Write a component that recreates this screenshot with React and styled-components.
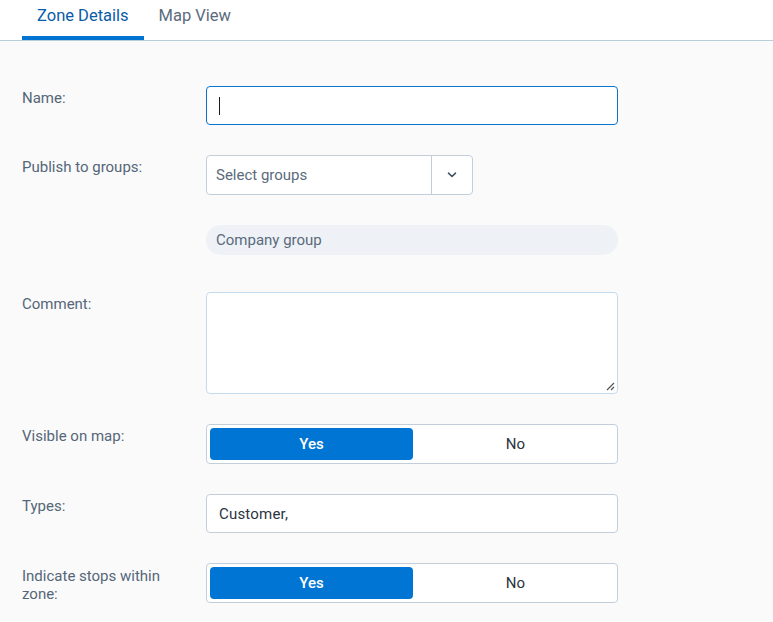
import React from "react";
import styled, { createGlobalStyle } from "styled-components";

const Global = createGlobalStyle`
  html, body { margin: 0; padding: 0; background: #fafafa; }
  body { font-family: Roboto, "Liberation Sans", sans-serif; }
  * { box-sizing: border-box; }
`;

const Page = styled.div`
  width: 773px;
  min-height: 622px;
  background: #fafafa;
`;

const TabBar = styled.div`
  display: flex;
  background: #ffffff;
  border-bottom: 1px solid #b9cdd9;
  padding-left: 22px;
  height: 41px;
`;

const Tab = styled.div`
  height: 40px;
  padding: 6px 15px 0;
  font-size: 16.5px;
  line-height: 20px;
  color: ${(p) => (p.$active ? "#0a5ca8" : "#5b6b7d")};
  border-bottom: 4px solid ${(p) => (p.$active ? "#0074d0" : "transparent")};
`;

const Form = styled.div`
  display: flex;
  flex-direction: column;
  padding: 45px 0 0 22px;
`;

const Row = styled.div`
  display: grid;
  grid-template-columns: 184px 412px;
  align-items: start;
  margin-bottom: ${(p) => p.$mb}px;
`;

const Label = styled.div`
  font-size: 15px;
  line-height: 18px;
  color: #556679;
  padding-top: ${(p) => p.$pt ?? 3}px;
  padding-right: 20px;
`;

const TextInput = styled.div`
  height: 39px;
  border: 1px solid ${(p) => (p.$focus ? "#0a74cf" : "#c2cfdb")};
  border-radius: 4px;
  background: #ffffff;
  display: flex;
  align-items: center;
  padding-left: 12px;
  font-size: 15px;
  letter-spacing: 0.2px;
  color: #2b3440;
`;

const Caret = styled.span`
  display: block;
  width: 1px;
  height: 18px;
  background: #1a1a1a;
`;

const Select = styled.div`
  width: 267px;
  height: 40px;
  border: 1px solid #c2cfdb;
  border-radius: 4px;
  background: #ffffff;
  display: flex;
  align-items: stretch;
`;

const SelectValue = styled.div`
  flex: 1;
  display: flex;
  align-items: center;
  padding-left: 9px;
  font-size: 15px;
  color: #5a6a7c;
  border-right: 1px solid #c2cfdb;
`;

const SelectArrow = styled.div`
  width: 40px;
  display: flex;
  align-items: center;
  justify-content: center;
  color: #3e5064;
`;

const Chip = styled.div`
  height: 30px;
  border-radius: 15px;
  background: #eef2f6;
  display: flex;
  align-items: center;
  padding-left: 10px;
  font-size: 15px;
  color: #5a6a7c;
`;

const TextArea = styled.div`
  position: relative;
  height: 102px;
  border: 1px solid #c4dbee;
  border-radius: 4px;
  background: #ffffff;
`;

const Grip = styled.svg`
  position: absolute;
  right: 2px;
  bottom: 2px;
`;

const Toggle = styled.div`
  height: 40px;
  border: 1px solid #c2cfdb;
  border-radius: 4px;
  background: #ffffff;
  display: grid;
  grid-template-columns: 203px 1fr;
  padding: 3px;
`;

const Option = styled.div`
  border-radius: 4px;
  display: flex;
  align-items: center;
  justify-content: center;
  padding-left: ${(p) => (p.$on ? 0 : 4)}px;
  font-size: 15px;
  font-weight: ${(p) => (p.$on ? 500 : 400)};
  background: ${(p) => (p.$on ? "#0075d3" : "transparent")};
  color: ${(p) => (p.$on ? "#ffffff" : "#2b3440")};
`;

const YesNo = () => (
  <Toggle>
    <Option $on>Yes</Option>
    <Option>No</Option>
  </Toggle>
);

export default function App() {
  return (
    <Page>
      <Global />
      <TabBar>
        <Tab $active>Zone Details</Tab>
        <Tab>Map View</Tab>
      </TabBar>
      <Form>
        <Row $mb={30}>
          <Label $pt={3}>Name:</Label>
          <TextInput $focus>
            <Caret />
          </TextInput>
        </Row>
        <Row $mb={30}>
          <Label $pt={3}>Publish to groups:</Label>
          <Select>
            <SelectValue>Select groups</SelectValue>
            <SelectArrow>
              <svg width="10" height="6" viewBox="0 0 10 6">
                <path d="M1.5 1.2 L5 4.5 L8.5 1.2" fill="none" stroke="currentColor" strokeWidth="1.6" strokeLinecap="round" strokeLinejoin="round" />
              </svg>
            </SelectArrow>
          </Select>
        </Row>
        <Row $mb={37}>
          <div />
          <Chip>Company group</Chip>
        </Row>
        <Row $mb={30}>
          <Label $pt={3}>Comment:</Label>
          <TextArea>
            <Grip width="10" height="10" viewBox="0 0 10 10">
              <path d="M9 2 L2 9 M9 6 L6 9" stroke="#555" strokeWidth="1.2" />
            </Grip>
          </TextArea>
        </Row>
        <Row $mb={30}>
          <Label $pt={3}>Visible on map:</Label>
          <YesNo />
        </Row>
        <Row $mb={30}>
          <Label $pt={3}>Types:</Label>
          <TextInput>Customer,</TextInput>
        </Row>
        <Row $mb={0}>
          <Label $pt={4}>Indicate stops within zone:</Label>
          <YesNo />
        </Row>
      </Form>
    </Page>
  );
}
